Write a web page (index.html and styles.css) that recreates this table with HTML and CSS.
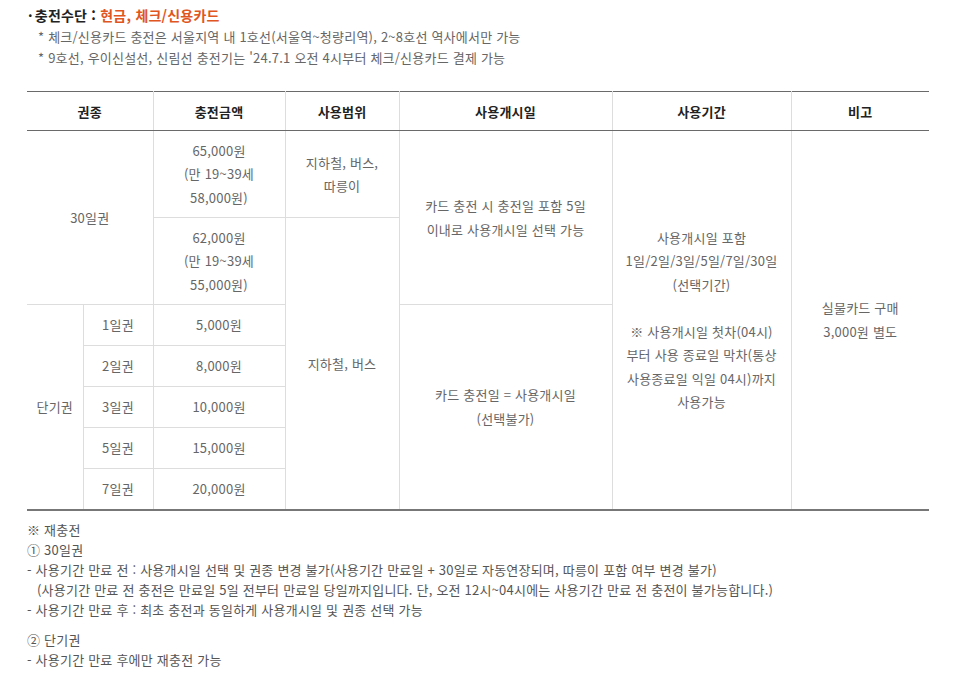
FILE: index.html
```html
<!DOCTYPE html>
<html lang="ko">
<head>
<meta charset="utf-8">
<link rel="stylesheet" href="styles.css">
</head>
<body>
<div class="page">
  <div class="method">
    <p class="method-title"><span class="dot">·</span>충전수단 : <span class="accent">현금, 체크/신용카드</span></p>
    <p class="method-note">* 체크/신용카드 충전은 서울지역 내 1호선(서울역~청량리역), 2~8호선 역사에서만 가능</p>
    <p class="method-note">* 9호선, 우이신설선, 신림선 충전기는 '24.7.1 오전 4시부터 체크/신용카드 결제 가능</p>
  </div>

  <table class="fare">
    <colgroup>
      <col class="c-a"><col class="c-b"><col class="c-c"><col class="c-d"><col class="c-e"><col class="c-f"><col class="c-g">
    </colgroup>
    <thead>
      <tr>
        <th colspan="2">권종</th>
        <th>충전금액</th>
        <th>사용범위</th>
        <th>사용개시일</th>
        <th>사용기간</th>
        <th>비고</th>
      </tr>
    </thead>
    <tbody>
      <tr class="r3">
        <td colspan="2" rowspan="2">30일권</td>
        <td>65,000원<br>(만 19~39세<br>58,000원)</td>
        <td>지하철, 버스,<br>따릉이</td>
        <td rowspan="2">카드 충전 시 충전일 포함 5일<br>이내로 사용개시일 선택 가능</td>
        <td rowspan="7">사용개시일 포함<br>1일/2일/3일/5일/7일/30일<br>(선택기간)<br><br>※ 사용개시일 첫차(04시)<br>부터 사용 종료일 막차(통상<br>사용종료일 익일 04시)까지<br>사용가능</td>
        <td rowspan="7">실물카드 구매<br>3,000원 별도</td>
      </tr>
      <tr class="r3">
        <td>62,000원<br>(만 19~39세<br>55,000원)</td>
        <td rowspan="6">지하철, 버스</td>
      </tr>
      <tr class="r1">
        <td rowspan="5">단기권</td>
        <td>1일권</td>
        <td>5,000원</td>
        <td rowspan="5">카드 충전일 = 사용개시일<br>(선택불가)</td>
      </tr>
      <tr class="r1">
        <td>2일권</td>
        <td>8,000원</td>
      </tr>
      <tr class="r1">
        <td>3일권</td>
        <td>10,000원</td>
      </tr>
      <tr class="r1">
        <td>5일권</td>
        <td>15,000원</td>
      </tr>
      <tr class="r1">
        <td>7일권</td>
        <td>20,000원</td>
      </tr>
    </tbody>
  </table>

  <div class="notes">
    <p>※ 재충전</p>
    <p>① 30일권</p>
    <p>- 사용기간 만료 전 : 사용개시일 선택 및 권종 변경 불가(사용기간 만료일 + 30일로 자동연장되며, 따릉이 포함 여부 변경 불가)</p>
    <p class="indent">(사용기간 만료 전 충전은 만료일 5일 전부터 만료일 당일까지입니다. 단, 오전 12시~04시에는 사용기간 만료 전 충전이 불가능합니다.)</p>
    <p>- 사용기간 만료 후 : 최초 충전과 동일하게 사용개시일 및 권종 선택 가능</p>
    <p class="gap">② 단기권</p>
    <p>- 사용기간 만료 후에만 재충전 가능</p>
  </div>
</div>
</body>
</html>
```

FILE: styles.css
```css
* { box-sizing: border-box; }
html, body { margin: 0; padding: 0; background: #fff; }
body {
  font-family: "Noto Sans CJK KR", "Noto Sans", sans-serif;
  color: #666;
  font-size: 13px;
  letter-spacing: 0.22px;
}
p { margin: 0; }
.page { padding: 4px 26px 0 27px; }

.method { padding-left: 1px; }
.method-title {
  font-size: 14px;
  font-weight: bold;
  color: #222;
  line-height: 22px;
}
.method-title .dot { margin-right: 2px; }
.method-title .accent { color: #e0561e; }
.method-note {
  padding-left: 10px;
  line-height: 21px;
  color: #666;
}

.fare {
  width: 902px;
  margin-top: 23px;
  border-collapse: collapse;
  table-layout: fixed;
  border-top: 1px solid #6a6a6a;
  border-bottom: 2px solid #777;
}
.c-a { width: 56px; }
.c-b { width: 70px; }
.c-c { width: 132px; }
.c-d { width: 114px; }
.c-e { width: 213px; }
.c-f { width: 179px; }
.c-g { width: 138px; }

.fare th {
  height: 39px;
  font-weight: bold;
  color: #222;
  text-align: center;
  border-bottom: 1px solid #6a6a6a;
  border-left: 1px solid #ddd;
  padding: 0;
}
.fare td {
  text-align: center;
  vertical-align: middle;
  line-height: 23.5px;
  border: 1px solid #ddd;
  padding: 0 2px;
  color: #666;
}
.fare th:first-child { border-left: none; }
.fare tr > td:first-child { border-left: none; }
.fare td:last-child { border-right: none; }
.fare tr.r3 { height: 87px; }
.fare tr.r1 { height: 41px; }

.notes {
  margin-top: 9px;
  color: #555;
  line-height: 20px;
}
.notes .indent { padding-left: 10px; }
.notes .gap { margin-top: 10px; }
```
